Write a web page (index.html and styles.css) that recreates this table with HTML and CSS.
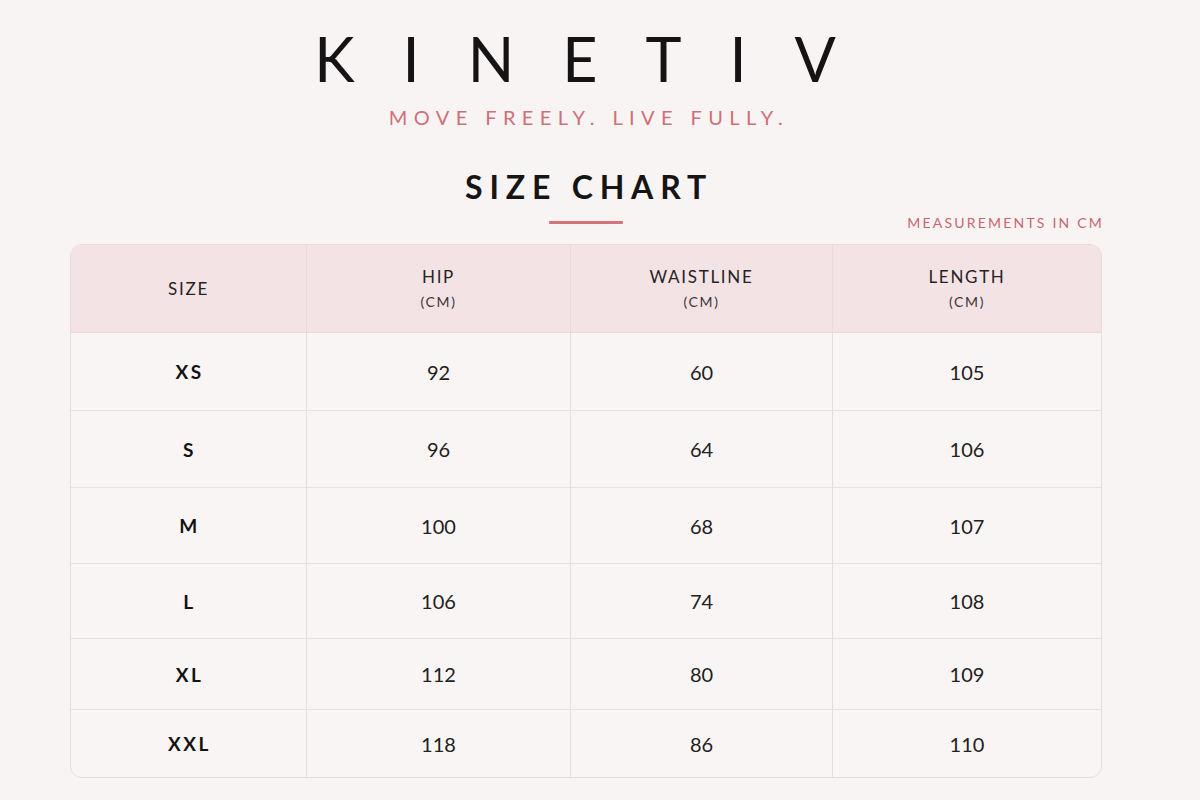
FILE: index.html
```html
<!DOCTYPE html>
<html lang="en">
<head>
<meta charset="utf-8">
<title>Kinetiv Size Chart</title>
<link rel="stylesheet" href="styles.css">
</head>
<body>
<main class="page">
  <header class="brand">
    <h1 class="logo">KINETIV</h1>
    <p class="tagline">MOVE FREELY. LIVE FULLY.</p>
  </header>
  <section class="chart">
    <h2 class="title">SIZE CHART</h2>
    <div class="title-row">
      <span></span>
      <span class="underline"></span>
      <span class="note">MEASUREMENTS IN CM</span>
    </div>
    <div class="table">
      <div class="row head">
        <div class="cell"><span class="h-main">SIZE</span></div>
        <div class="cell"><span class="h-main">HIP</span><span class="h-unit">(CM)</span></div>
        <div class="cell"><span class="h-main">WAISTLINE</span><span class="h-unit">(CM)</span></div>
        <div class="cell"><span class="h-main">LENGTH</span><span class="h-unit">(CM)</span></div>
      </div>
      <div class="row r1">
        <div class="cell size">XS</div><div class="cell">92</div><div class="cell">60</div><div class="cell">105</div>
      </div>
      <div class="row r2">
        <div class="cell size">S</div><div class="cell">96</div><div class="cell">64</div><div class="cell">106</div>
      </div>
      <div class="row r3">
        <div class="cell size">M</div><div class="cell">100</div><div class="cell">68</div><div class="cell">107</div>
      </div>
      <div class="row r4">
        <div class="cell size">L</div><div class="cell">106</div><div class="cell">74</div><div class="cell">108</div>
      </div>
      <div class="row r5">
        <div class="cell size">XL</div><div class="cell">112</div><div class="cell">80</div><div class="cell">109</div>
      </div>
      <div class="row r6">
        <div class="cell size">XXL</div><div class="cell">118</div><div class="cell">86</div><div class="cell">110</div>
      </div>
    </div>
  </section>
</main>
</body>
</html>
```

FILE: styles.css
```css
* { box-sizing: border-box; }

html, body {
  margin: 0;
  padding: 0;
  background: #f8f4f3;
}

body {
  font-family: Lato, "Noto Sans", sans-serif;
  color: #1c1a1a;
  width: 1200px;
  height: 800px;
  overflow: hidden;
}

.page {
  width: 1032px;
  margin-left: 70px;
  padding-top: 24px;
}

.brand {
  text-align: center;
}

.logo {
  margin: 0;
  font-weight: 400;
  font-size: 61px;
  line-height: 70px;
  letter-spacing: 48px;
  padding-left: 26px;
  color: #151313;
}

.tagline {
  margin: 11px 0 0;
  font-size: 20px;
  line-height: 24px;
  letter-spacing: 6.4px;
  padding-left: 6px;
  color: #cf6f78;
}

.chart {
  margin-top: 38px;
}

.title {
  margin: 0;
  text-align: center;
  font-weight: 700;
  font-size: 32px;
  line-height: 40px;
  letter-spacing: 6.8px;
  padding-left: 6px;
  color: #161414;
}

.title-row {
  display: grid;
  grid-template-columns: 1fr 74px 1fr;
  align-items: center;
  margin-top: 4px;
  height: 20px;
}

.underline {
  display: block;
  height: 3px;
  margin-top: 2px;
  background: #d4747d;
  border-radius: 1px;
}

.note {
  justify-self: end;
  font-size: 14px;
  letter-spacing: 2.2px;
  color: #c9666f;
  margin-right: -2px;
  margin-top: 2px;
}

.table {
  margin-top: 13px;
  border: 1px solid #e7dcdc;
  border-radius: 12px;
  overflow: hidden;
  background: #f9f5f4;
}

.row {
  display: grid;
  grid-template-columns: 235px 264px 262px 1fr;
  border-top: 1px solid #e8dfdf;
}

.row.head {
  border-top: none;
  background: #f4e3e4;
  height: 88px;
  border-bottom: 1px solid #ead9da;
}

.row.r1 { border-top: none; height: 77px; }
.row.r2 { height: 77px; }
.row.r3 { height: 76px; }
.row.r4 { height: 75px; }
.row.r5 { height: 71px; }
.row.r6 { height: 68px; }

.cell {
  display: flex;
  flex-direction: column;
  align-items: center;
  justify-content: center;
  border-left: 1px solid #e6dcdc;
  font-size: 20px;
  color: #222020;
}

.cell:first-child {
  border-left: none;
}

.cell.size {
  font-weight: 700;
  font-size: 19px;
  letter-spacing: 2.5px;
  padding-left: 2px;
  color: #141212;
}

.h-main {
  font-size: 17px;
  letter-spacing: 1.7px;
  line-height: 22px;
  color: #262323;
}

.h-unit {
  font-size: 14px;
  letter-spacing: 1.6px;
  line-height: 20px;
  margin-top: 4px;
  color: #3a3636;
}
```
